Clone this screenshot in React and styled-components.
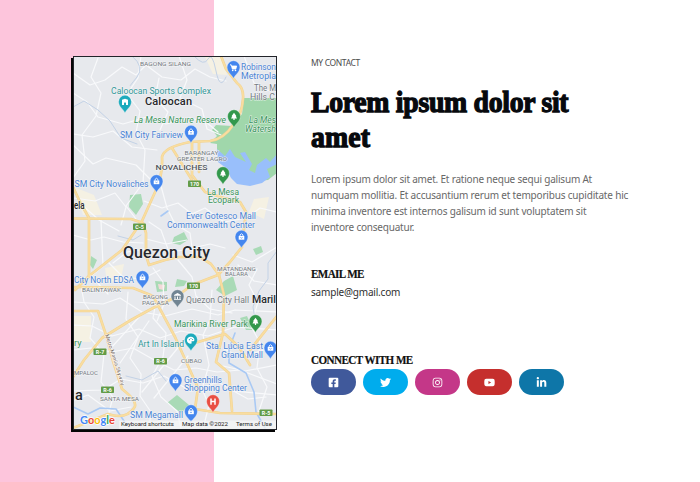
import React from "react";
import styled, { createGlobalStyle } from "styled-components";
import { FaFacebookSquare, FaTwitter, FaInstagram, FaYoutube, FaLinkedinIn } from "react-icons/fa";

const GlobalStyle = createGlobalStyle`
  * { box-sizing: border-box; }
  body { margin: 0; background: #fff; overflow: hidden; }
`;

const Page = styled.main`
  display: flex;
  align-items: flex-start;
  width: 700px;
  height: 482px;
  padding: 56px 0 0 73px;
  background: linear-gradient(to right, #fdc5dc 214px, #fff 214px);
  font-family: "Noto Sans", sans-serif;
`;

const MapCard = styled.section`
  flex: none;
  width: 204px;
  height: 374px;
  border: 1px solid #22242a;
  box-shadow: -2px 2px 0 #050505;
  overflow: hidden;
`;

const MapDrawing = styled.svg`
  display: block;
  width: 202px;
  height: 372px;
  font-family: Roboto, sans-serif;
`;

const Details = styled.section`
  display: flex;
  flex-direction: column;
  align-items: flex-start;
  margin-left: 34px;
  white-space: nowrap;
`;

const Eyebrow = styled.p`
  margin: 0;
  height: 14px;
  font: 8.5px/14px "Noto Sans", sans-serif;
  letter-spacing: ${(p) => p.$track}px;
  color: #4c4c4c;
`;

const Title = styled.h1`
  margin: 15px 0 0;
  font: 900 29.5px/35px "Liberation Serif", serif;
  color: #07090d;
  -webkit-text-stroke: 1.3px #07090d;
  transform: scaleX(0.94);
  transform-origin: left;
`;

const Line = styled.span`
  display: block;
  letter-spacing: ${(p) => p.$track}px;
`;

const Copy = styled.p`
  margin: 16px 0 0;
  font: 10px/16px "Noto Sans", sans-serif;
  color: #686868;
`;

const Label = styled.h2`
  margin: ${(p) => p.$gap}px 0 0;
  height: 16px;
  font: 700 12px/16px "Liberation Serif", serif;
  letter-spacing: ${(p) => p.$track}px;
  color: #111;
  -webkit-text-stroke: 0.2px #111;
  transform: scaleX(0.925);
  transform-origin: left;
`;

const Email = styled.p`
  margin: 2px 0 0;
  height: 16px;
  font: 10px/16px "Noto Sans", sans-serif;
  letter-spacing: ${(p) => p.$track}px;
  color: #303030;
`;

const Socials = styled.nav`
  display: flex;
  gap: 7.1px;
  margin-top: 1px;
`;

const SocialButton = styled.a`
  display: flex;
  align-items: center;
  justify-content: center;
  width: 45px;
  height: 26px;
  border-radius: 13px;
  background: ${(p) => p.$color};
  color: #fff;
  font-size: 11px;
`;

const yellowRoads = [
  "M221 56L226 69L237 83Q244 88 243 99Q242 115 233 125Q224 139 210 141L190 142Q164 147 162 157Q163 174 156 190L142 221L122 250L89 276L75 290",
  "M73 218.5L131 219L143 223L146 233L146 255L149 265L165 260L179 257L200 257L211 264L219 275",
  "M73 187L80 202L89 218L89 277",
  "M242 247L230 262L218 275L192 285L176 297L153 308L131 320L102 338L84 360L73 377",
  "M192 142L192 175L205 192L224 198L240 202L246 212L242 245",
  "M199 142V172M172 148L192 180",
  "M73 311L98 311L106 335L113 361L122 389Q139 402 134 408Q126 420 108 414L73 428",
  "M73 287L133 288L153 296L175 337L189 368L198 388L195 409L220 413L277 414",
  "M219 275L224 295L223 333L216 362L229 373L232 411",
  "M188 345L225 334L239 347L250 365M250 350L277 316",
];
const whiteRoads = [
  "M73 73L90 85L105 80L122 67L136 75L146 65L162 77L181 80L195 69L210 77L226 81",
  "M73 93L87 102L98 117L123 124L147 117L166 124L190 118L206 122L218 132",
  "M73 134L93 137L113 131L132 147L157 150M73 145L93 164L106 158L136 165L157 186",
  "M98 58L91 77L101 93L96 116L82 135L85 161L73 178",
  "M141 56L138 78L127 94L140 111L136 133L145 150L143 183L126 206L136 219",
  "M179 56L187 80L180 98L202 109L207 129L221 135M159 78L155 98L168 112L160 130",
  "M74 198L95 201L115 193L126 207L121 225M82 205L99 220L119 231",
  "M144 201L162 208L178 203L192 214L205 208L224 222L241 219M161 186L167 208L175 224L190 233L193 255",
  "M73 235L91 240L104 237L123 242L143 243M101 220L103 266L91 276L108 294",
  "M149 222L161 230L169 252L184 250L210 244L225 248M146 239L166 244L187 240",
  "M153 268L163 282L164 304L157 321M178 260L192 277L196 296L210 309L232 313",
  "M74 302L103 304L120 298L142 312L165 316L192 309L218 315L235 310L277 312",
  "M73 325L92 326L112 336L139 329L160 338L181 331L208 336L235 327L277 330",
  "M73 350L91 348L112 352L133 348L156 361L174 370L196 368L217 372L240 370L277 384",
  "M73 391L103 390L121 379L143 383L164 376L191 391L218 382L234 391L277 395",
  "M81 286L84 302L94 317L90 338L104 354L101 382L113 397L108 416",
  "M128 292L126 319L138 337L130 358L141 374L140 396L151 412L149 429",
  "M157 296L153 318L166 333L163 357L152 376L161 397L177 411L181 429",
  "M212 290L210 320L203 335L209 365L202 389L209 405L203 429",
  "M257 269L249 285L258 302L251 326L260 343L257 368L267 387L258 414",
  "M244 56L254 83L266 91L277 88",
  "M233 255L252 262L277 247M238 265L254 281L277 285M245 219L260 208L277 212",
  "M109 263L123 277L142 279L160 270M113 263L127 252L145 249M111 348L140 316M120 363L149 321M142 392L181 344M154 398L188 356",
  "M224 349L241 357L277 346M223 366L245 371L277 365M230 389L248 399L266 397M75 400L88 395L110 411L131 407",
];
const waterways = [
  "M235 333L229 349L229 363L246 373L254 392L256 412L265 428",
  "M73 407L88 414L100 408L116 409L126 424",
  "M161 216L168 211",
];
const streams = [
  "M132 56Q145 67 137 77T130 86M194 56Q204 67 208 59T216 71T226 77",
  "M73 107L84 101L98 110L110 121L121 138L137 144",
  "M118 236L133 240L141 235M126 376L142 380L158 371L166 381",
  "M277 251L268 263L268 279L259 291L253 307L256 325",
];

function Pin({ x, y, color = "#4486ee", kind = "bag" }) {
  return (
    <g transform={`translate(${x} ${y})`}>
      <path d="M0 10.5C-1.3 6.6-6.4 4.5-6.4-.8A6.4 6.4 0 0 1 6.4-.8C6.4 4.5 1.3 6.6 0 10.5Z" fill={color} stroke="#fff" strokeOpacity=".55" strokeWidth=".5" />
      {kind === "bag" && <><path d="M-2.8-1.5H2.8V2.2H-2.8Z" fill="#fff" /><path d="M-1.5-1.3V-2.5Q0-5 1.5-2.5V-1.3" fill="none" stroke="#fff" strokeWidth=".9" /><path d="M-1.1 0Q0 1.3 1.1 0" fill="none" stroke={color} strokeWidth=".7" /></>}
      {kind === "cart" && <><path d="M-3.5-3.2H-2.3L-1.2 1H2.3L3.2-2H-1.9" fill="#fff" stroke="#fff" strokeWidth=".8" /><circle cx="-.8" cy="2.4" r=".8" fill="#fff" /><circle cx="2" cy="2.4" r=".8" fill="#fff" /></>}
      {kind === "tree" && <path d="M0-4.3L2.5-.8H1.8L3 1.4H.6V3H-.6V1.4H-3L-1.8-.8H-2.5Z" fill="#fff" />}
      {kind === "stadium" && <path d="M-3-2.8L0-3.8L3-2.8V2.6H1V.4Q0-.7-1 .4V2.6H-3Z" fill="#fff" />}
      {kind === "civic" && <path d="M-3.5-2L0-4L3.5-2V-1.2H-3.5ZM-3-.6H-2V2H-3ZM-.5-.6H.5V2H-.5ZM2-.6H3V2H2ZM-3.5 2.2H3.5V3H-3.5Z" fill="#fff" />}
      {kind === "art" && <><path d="M0-3.7A3.5 3.5 0 1 0 .4 3.1Q1.2 2.6.4 1.6Q0 .8 1.2.7H2.5Q3.5.6 3.4-.8Q3-3.4 0-3.7Z" fill="#fff" /><circle cx="-1.6" cy="-.8" r=".6" fill={color} /><circle cx="0" cy="-2" r=".6" fill={color} /><circle cx="1.6" cy="-1" r=".6" fill={color} /></>}
      {kind === "hospital" && <path d="M-2-3.5V2.7M2-3.5V2.7M-2-.4H2" fill="none" stroke="#fff" strokeWidth="1.5" />}
    </g>
  );
}

const blue = "#4a83d4", green = "#39945a", teal = "#329797", gray = "#747a80", dark = "#26282c";
const labels = [
  ["BAGONG SILANG", 140, 65.5, 51, 5.4, gray],
  ["Robinson", 241, 69.8, 35, 8.3, blue],
  ["Metropla", 241, 78.8, 35, 8.3, blue],
  ["The M", 254, 91, 22, 8.3, gray],
  ["Hills C", 250, 99.5, 25, 8.3, gray],
  ["Caloocan Sports Complex", 111, 93.5, 100, 8.3, teal],
  ["La Mesa Nature Reserve", 134, 122.7, 92, 8.3, green, 400, true],
  ["La Mes", 249, 122.7, 27, 8.3, green, 400, true],
  ["Watersh", 245, 132, 31, 8.3, green, 400, true],
  ["SM City Fairview", 120, 138, 63, 8.3, blue],
  ["BARANGAY", 184.5, 154.7, 34, 5.2, gray],
  ["GREATER LAGRO", 177, 160.8, 50, 5.2, gray],
  ["NOVALICHES", 155.5, 170, 52, 6.6, "#51565c", 500],
  ["SM City Novaliches", 74.5, 187.2, 74, 8.3, blue],
  ["La Mesa", 207, 194.5, 32, 8.3, green],
  ["Ecopark", 208, 203.3, 31, 8.3, green],
  ["ela", 74, 208.8, 10.5, 10, dark, 500],
  ["Ever Gotesco Mall", 186, 219.3, 70, 8.3, blue],
  ["Commonwealth Center", 167, 228, 88, 8.3, blue],
  ["MATANDANG", 217, 270.5, 39, 5.2, gray],
  ["BALARA", 225, 276.3, 23, 5.2, gray],
  ["City North EDSA", 74, 283, 60, 8.3, blue],
  ["BALINTAWAK", 82, 291.5, 39, 5.2, gray],
  ["BAGONG", 143, 299, 25, 5.2, gray],
  ["PAG-ASA", 142, 305, 27, 5.2, gray],
  ["Quezon City Hall", 186, 302.5, 63, 8.3, gray],
  ["Maril", 252, 303, 24, 10.6, dark, 500],
  ["Marikina River Park", 174, 327.2, 74, 8.3, green],
  ["ry", 74, 345.5, 7.5, 8.3, green],
  ["Art In Island", 138, 346.5, 46, 8.3, teal],
  ["Sta. Lucia East", 206, 349.3, 57, 8.3, blue],
  ["Grand Mall", 221, 358, 42, 8.3, blue],
  ["CUBAO", 181, 362.5, 21, 5.2, gray],
  ["MPALOC", 74, 374.8, 24, 5.2, gray],
  ["Greenhills", 184, 382.5, 38, 8.3, blue],
  ["Shopping Center", 184, 391, 63, 8.3, blue],
  ["SANTA MESA", 100, 400.5, 39, 5.2, gray],
  ["SM Megamall", 130, 417.8, 53, 8.3, blue],
];

function MapView() {
  return (
    <MapDrawing viewBox="74 57 202 372" role="img" aria-label="Map of Quezon City">
      <rect x="73" y="56" width="204" height="374" fill="#e7e9ed" />
      <g fill="#f5f1e3">
        <path d="M74 187L94 195L102 215L83 215ZM74 316H91V342H74ZM254 199L269 197L264 219L249 212ZM205 57H221L227 75L213 74ZM105 268L124 264L121 279L107 283Z" />
      </g>
      <path d="M244 98H277V173L268 180L250 182L236 176L221 158L217 149L217 144L210 143L217 136L212 130L216 125L232 126L242 114Z" fill="#a0d7ab" />
      <path d="M217 149L225 156L230 149L235 157L246 162L240 153L245 152L252 164L249 170L255 173L257 165L266 158L270 162L277 154V164L267 169L270 177L262 183L250 186L237 184L231 178L226 168L218 162Z" fill="#99bffb" />
      <g fill="#a9dab6">
        <path d="M130 195L141 194L143 204L136 215L129 207ZM174 237L184 232L188 240L180 245L172 243ZM91 256L97 260L93 269L90 265ZM253 249L261 246L263 252L256 255ZM224 281L233 276L237 290L225 296L216 290ZM177 279L187 281L184 286L175 287ZM155 281L167 282V291L157 292ZM177 395L189 405L181 413L167 403ZM240 318L247 316L253 330L246 330Z" />
      </g>
      <path d="M158 284L165 285L164 290L159 289Z" fill="#f3dad9" />
      <g fill="none" strokeLinejoin="round" strokeLinecap="round">
        {whiteRoads.map((d) => <path key={d} d={d} stroke="#f8f9fb" strokeWidth="1.2" />)}
        {streams.map((d) => <path key={d} d={d} stroke="#c3d2e6" strokeWidth="1" />)}
        {waterways.map((d) => <path key={d} d={d} stroke="#a9c9f4" strokeWidth="1.6" />)}
        {yellowRoads.map((d) => <path key={d} d={d} stroke="#f1d392" strokeWidth="2.7" />)}
        {yellowRoads.map((d) => <path key={d} d={d} stroke="#f9dda0" strokeWidth="1.7" />)}
      </g>
      {[["C-5", 133, 223.5], ["170", 188, 180.5], ["170", 187, 282.5], ["R-7", 93.5, 348.5], ["R-6", 154, 358], ["R-6", 101, 386.5], ["R-5", 259.5, 409.5]].map(([t, x, y]) => (
        <g key={`${x}-${y}`}><rect x={x} y={y} width="13" height="6.6" rx=".8" fill="#639c48" /><text x={x + 6.5} y={y + 5.2} fontSize="5.3" fontWeight="700" textAnchor="middle" fill="#fff">{t}</text></g>
      ))}
      <text fontSize="5.5" fill="#776a5d" stroke="#fff" strokeWidth=".8" paintOrder="stroke" transform="translate(105 335) rotate(72)" textLength="53">Metro Manila Skyway</text>
      <g stroke="#f7f8fa" strokeOpacity=".8" strokeWidth="1" paintOrder="stroke">
        {labels.map(([text, x, y, width, size, color, weight = 400, italic]) => (
          <text key={`${text}-${y}`} x={x} y={y} textLength={width} lengthAdjust="spacingAndGlyphs" fontSize={size} fill={color} fontWeight={weight} fontStyle={italic ? "italic" : "normal"}>{text}</text>
        ))}
        <text x="145" y="105.3" fontSize="11" fontWeight="500" fill={dark} textLength="47">Caloocan</text>
        <text x="123" y="258" fontSize="16" fontWeight="500" fill={dark} textLength="87">Quezon City</text>
        <text x="75" y="400" fontSize="14.5" fontWeight="500" fill={dark}>a</text>
      </g>
      <Pin x={233.5} y={68} kind="cart" /><Pin x={125} y={102.5} color="#1caabc" kind="stadium" />
      <Pin x={234} y={117} color="#33984c" kind="tree" /><Pin x={191} y={132.5} />
      <Pin x={223} y={174} color="#33984c" kind="tree" /><Pin x={156.5} y={182} />
      <Pin x={241.5} y={237.5} /><Pin x={142.5} y={278} />
      <Pin x={177.5} y={297} color="#718593" kind="civic" /><Pin x={255.5} y={322} color="#33984c" kind="tree" />
      <Pin x={191} y={340.5} color="#1caabc" kind="art" /><Pin x={270.5} y={348.5} />
      <Pin x={175.5} y={381} /><Pin x={213} y={402} color="#e94f43" kind="hospital" /><Pin x={191} y={412} />
      <rect x="119" y="420.5" width="157" height="8.5" fill="#f5f5f5" opacity=".75" />
      <g fontSize="6" fill="#222">
        <text x="121" y="426.2" textLength="53" lengthAdjust="spacingAndGlyphs">Keyboard shortcuts</text>
        <text x="182" y="426.2" textLength="46" lengthAdjust="spacingAndGlyphs">Map data ©2022</text>
        <text x="236" y="426.2" textLength="36" lengthAdjust="spacingAndGlyphs">Terms of Use</text>
      </g>
      <text x="80" y="424" fontFamily="Lato" fontSize="11.5" fontWeight="700" textLength="35" lengthAdjust="spacingAndGlyphs" stroke="#fff" strokeWidth="1.3" paintOrder="stroke">
        <tspan fill="#4285f4">G</tspan><tspan fill="#ea4335">o</tspan><tspan fill="#fbbc04">o</tspan><tspan fill="#4285f4">g</tspan><tspan fill="#34a853">l</tspan><tspan fill="#ea4335">e</tspan>
      </text>
    </MapDrawing>
  );
}

const socialLinks = [
  ["Facebook", "#40599b", FaFacebookSquare],
  ["Twitter", "#00aced", FaTwitter],
  ["Instagram", "#c43788", FaInstagram],
  ["YouTube", "#c52f2d", FaYoutube],
  ["LinkedIn", "#0e76a8", FaLinkedinIn],
];

export default function App() {
  return (
    <>
      <GlobalStyle />
      <Page>
        <MapCard><MapView /></MapCard>
        <Details>
          <Eyebrow $track={-0.36}>MY CONTACT</Eyebrow>
          <Title>
            <Line $track={-0.3}>Lorem ipsum dolor sit</Line>
            <Line $track={0.2}>amet</Line>
          </Title>
          <Copy>
            <Line $track={-0.2}>Lorem ipsum dolor sit amet. Et ratione neque sequi galisum At</Line>
            <Line $track={-0.19}>numquam mollitia. Et accusantium rerum et temporibus cupiditate hic</Line>
            <Line $track={-0.18}>minima inventore est internos galisum id sunt voluptatem sit</Line>
            <Line $track={-0.21}>inventore consequatur.</Line>
          </Copy>
          <Label $gap={31} $track={-0.65}>EMAIL ME</Label>
          <Email $track={-0.19}>sample@gmail.com</Email>
          <Label $gap={52} $track={-0.6}>CONNECT WITH ME</Label>
          <Socials>
            {socialLinks.map(([name, color, Icon]) => (
              <SocialButton key={name} $color={color} aria-label={name}><Icon /></SocialButton>
            ))}
          </Socials>
        </Details>
      </Page>
    </>
  );
}
